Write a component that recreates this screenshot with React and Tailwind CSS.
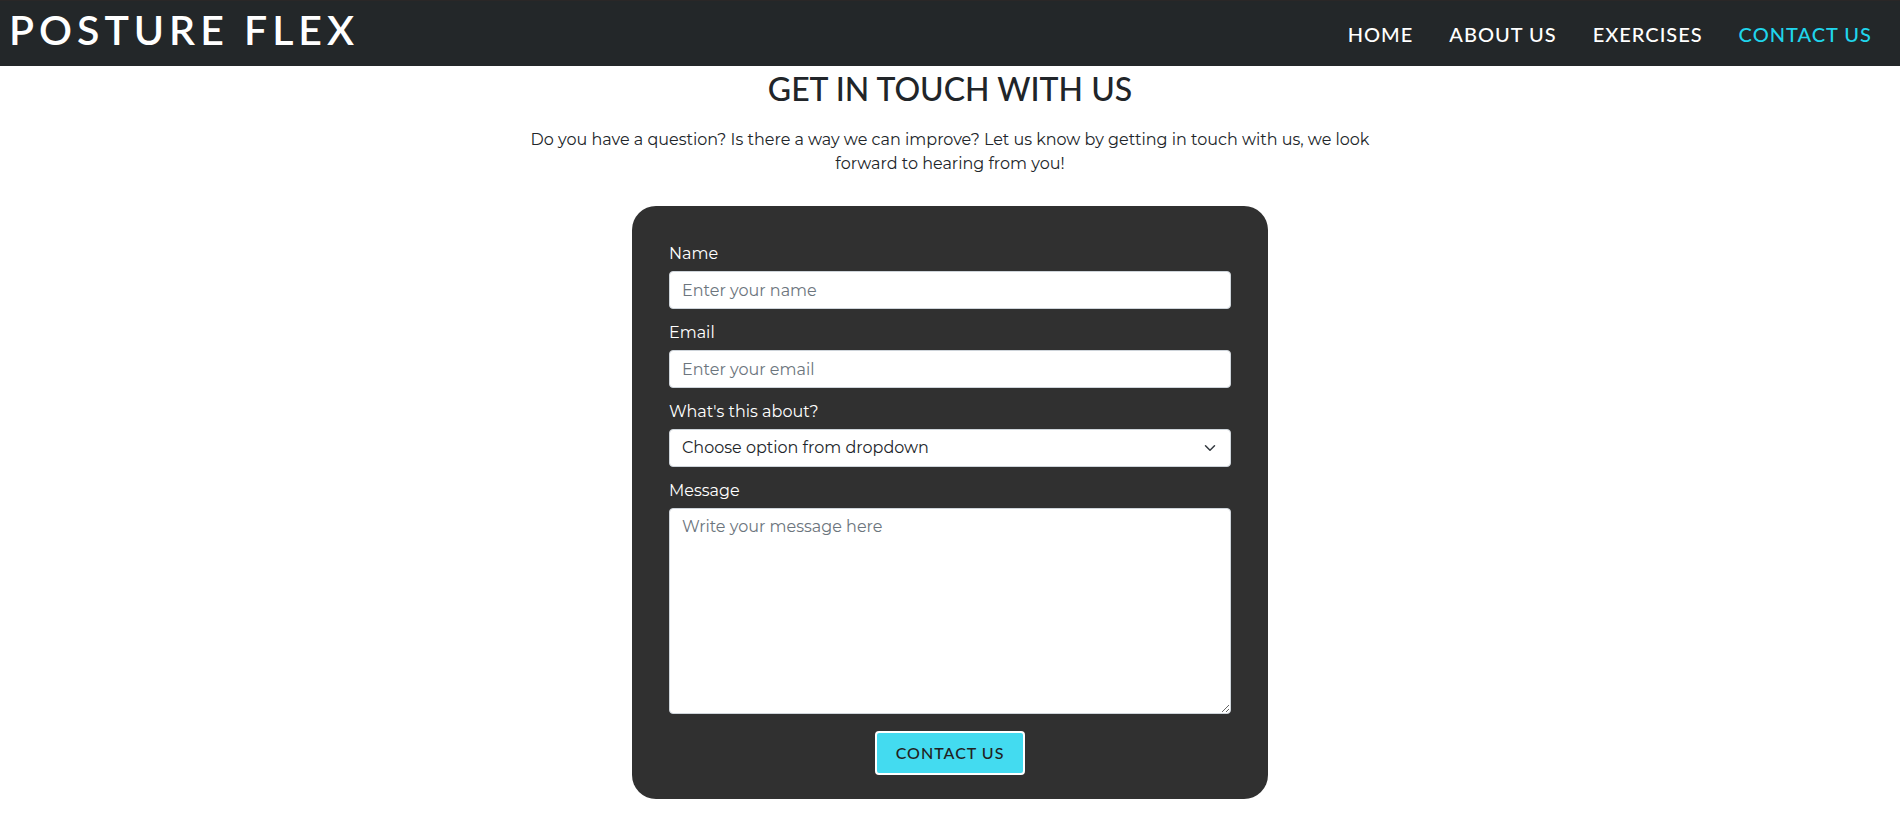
const links = [
  { label: "HOME", href: "#home" },
  { label: "ABOUT US", href: "#about" },
  { label: "EXERCISES", href: "#exercises" },
  { label: "CONTACT US", href: "#contact", active: true },
];

const fieldClass =
  "w-full rounded-sm border border-[#ced4da] bg-white px-3 text-base leading-6 text-[#212529] placeholder:text-[#6c757d]";

function Field({ id, label, children }) {
  return (
    <div className="flex flex-col gap-[5px]">
      <label htmlFor={id} className="text-base leading-6 text-white">
        {label}
      </label>
      {children}
    </div>
  );
}

export default function App() {
  return (
    <div className="min-h-screen bg-white font-[Montserrat,Inter,sans-serif] text-[#212529]">
      <header className="flex items-center justify-between border-t border-[#2a2727] bg-[#232729] pr-7 pb-1 pl-[9px] font-[Lato,sans-serif] text-white">
        <a href="#home" className="pb-1 text-[41px] leading-[57px] font-semibold tracking-[5px]">
          POSTURE FLEX
        </a>
        <nav className="flex gap-9 pt-1 text-xl leading-6 font-medium tracking-[1px]">
          {links.map((l) => (
            <a key={l.label} href={l.href} className={l.active ? "text-[#20d5ec]" : "text-white"}>
              {l.label}
            </a>
          ))}
        </nav>
      </header>

      <main className="flex flex-col items-center px-4">
        <h1 className="pt-1 text-center font-[Lato,sans-serif] text-[32px] leading-[38px] font-medium">
          GET IN TOUCH WITH US
        </h1>
        <p className="max-w-[866px] pt-5 text-center text-base leading-6">
          Do you have a question? Is there a way we can improve? Let us know by getting in touch with us, we look
          forward to hearing from you!
        </p>

        <form
          className="mt-[30px] flex w-full max-w-[636px] flex-col gap-3 rounded-3xl bg-[#303030] px-[37px] pt-9 pb-6"
          onSubmit={(e) => e.preventDefault()}
        >
          <Field id="name" label="Name">
            <input id="name" type="text" placeholder="Enter your name" className={`${fieldClass} h-[38px]`} />
          </Field>
          <Field id="email" label="Email">
            <input id="email" type="email" placeholder="Enter your email" className={`${fieldClass} h-[38px]`} />
          </Field>
          <Field id="topic" label="What's this about?">
            <div className="relative">
              <select id="topic" className={`${fieldClass} block h-[38px] appearance-none`}>
                <option>Choose option from dropdown</option>
              </select>
              <svg
                viewBox="0 0 16 16"
                className="pointer-events-none absolute top-[13px] right-[15px] h-3 w-3"
                fill="none"
                stroke="#343a40"
                strokeWidth="2"
                strokeLinecap="round"
                strokeLinejoin="round"
                aria-hidden="true"
              >
                <path d="M2 5l6 6 6-6" />
              </svg>
            </div>
          </Field>
          <Field id="message" label="Message">
            <textarea
              id="message"
              placeholder="Write your message here"
              className={`${fieldClass} block h-[206px] resize py-1.5`}
            />
          </Field>
          <button
            type="submit"
            className="mt-[5px] h-11 self-center rounded-sm border-2 border-white bg-[#43dbf0] px-[19px] font-[Lato,sans-serif] text-base leading-6 font-medium tracking-[1px] text-[#212121]"
          >
            CONTACT US
          </button>
        </form>
      </main>
    </div>
  );
}
